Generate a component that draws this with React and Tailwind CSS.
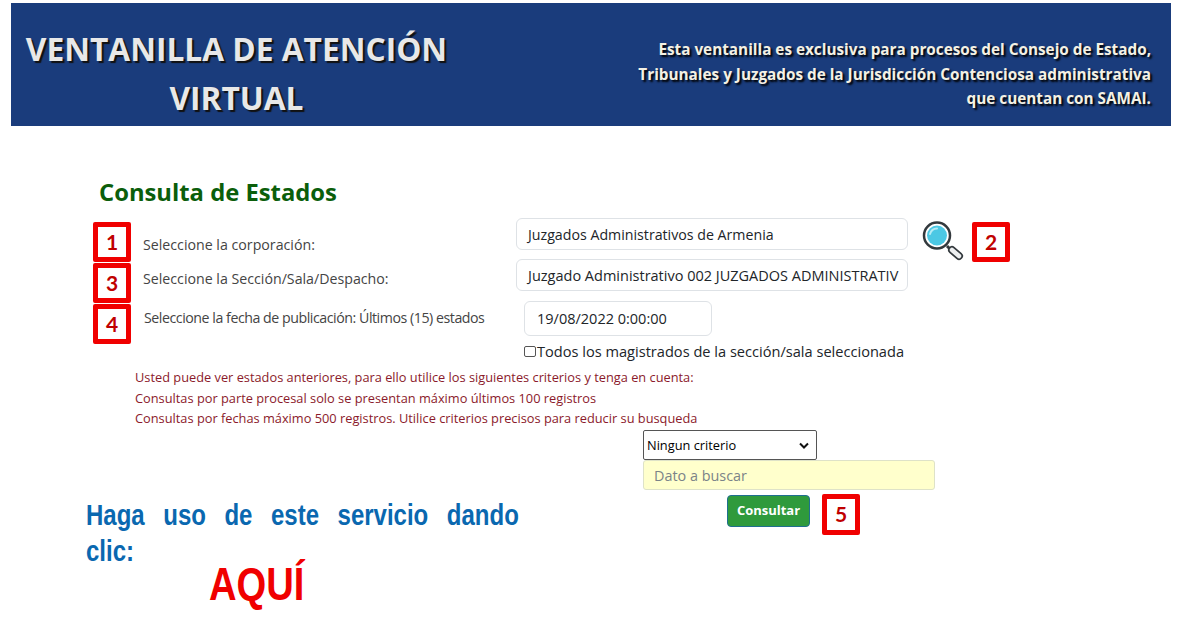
// App.jsx
import React from "react";

function NumBox({ n, className = "" }) {
  return (
    <div className={`flex h-[40px] w-[38px] shrink-0 items-center justify-center rounded-[2px] border-[5px] border-[#f00000] bg-white font-['Lato',sans-serif] text-[21px] font-bold text-[#c00000] ${className}`}>
      {n}
    </div>
  );
}

function Lupa() {
  return (
    <svg width="42" height="44" viewBox="0 0 42 44" className="shrink-0">
      <path d="M25 26l4 4" stroke="#33393d" strokeWidth="3" />
      <path d="M30 30l7 6" stroke="#33393d" strokeWidth="8" strokeLinecap="round" />
      <path d="M30 30l7 6" stroke="#eef0f1" strokeWidth="4.500" strokeLinecap="round" />
      <circle cx="15" cy="15.500" r="13" fill="#fff" stroke="#33393d" strokeWidth="2.500" />
      <circle cx="15" cy="15.500" r="10" fill="#4cc8e4" />
      <path d="M8 14c1-3.500 3.500-5.500 7-5.500" fill="none" stroke="#b6ecf6" strokeWidth="2" strokeLinecap="round" />
    </svg>
  );
}

export default function App() {
  return (
    <div className="h-[631px] w-[1180px] overflow-hidden bg-white pt-[3px] font-['Open_Sans',sans-serif] text-[#212529]">
      <header className="mx-[11px] flex h-[123px] w-[1160px] items-start justify-between bg-[#1a3c7c]">
        <h1 className="ml-[14px] mt-[21px] w-[423px] text-center text-[31.700px] font-bold leading-[49px] text-[#e8e8e8] [text-shadow:2px_2px_1px_#111]">
          VENTANILLA DE ATENCIÓN VIRTUAL
        </h1>
        <p className="mr-[20px] mt-[34px] whitespace-nowrap text-right text-[15.300px] font-bold leading-[24.500px] text-[#f4f1e4] [text-shadow:2px_2px_2px_#000]">
          Esta ventanilla es exclusiva para procesos del Consejo de Estado,
          <br />
          Tribunales y Juzgados de la Jurisdicción Contenciosa administrativa
          <br />
          que cuentan con SAMAI.
        </p>
      </header>

      <h2 className="ml-[99px] mt-[50px] text-[23.800px] font-bold leading-[32px] text-[#0b5e0b]">Consulta de Estados</h2>

      <section className="ml-[93px] mt-[10px] text-[#444]">
        <div className="flex h-[41px]">
          <div className="pt-[4px]"><NumBox n="1" /></div>
          <span className="ml-[12px] w-[373px] pt-[17px] text-[14.200px] leading-[20px]">Seleccione la corporación:</span>
          <div className="flex h-[32px] w-[392px] items-center rounded-[6px] border border-[#dee2e6] pl-[11px] pt-[2px] text-[14.200px] text-[#212529]">
            Juzgados Administrativos de Armenia
          </div>
          <div className="ml-[14px] pt-[2px]"><Lupa /></div>
          <div className="ml-[8px] pt-[4px]"><NumBox n="2" /></div>
        </div>

        <div className="flex h-[42px]">
          <div className="pt-[4px]"><NumBox n="3" /></div>
          <span className="ml-[12px] w-[373px] pt-[10px] text-[14.200px] leading-[20px]">Seleccione la Sección/Sala/Despacho:</span>
          <div className="flex h-[32px] w-[392px] items-center overflow-hidden whitespace-nowrap rounded-[6px] border border-[#dee2e6] pl-[11px] pr-[10px] pt-[2px] text-[14.500px] text-[#212529]">
            Juzgado Administrativo 002 JUZGADOS ADMINISTRATIV
          </div>
        </div>

        <div className="flex">
          <div className="pt-[3px]"><NumBox n="4" /></div>
          <span className="ml-[13px] w-[380px] whitespace-nowrap pt-[7px] text-[14.200px] leading-[20px] tracking-[-0.46px]">Seleccione la fecha de publicación: Últimos (15) estados</span>
          <div>
            <div className="flex h-[35px] w-[188px] items-center rounded-[6px] border border-[#dee2e6] pl-[12px] pt-[1px] text-[14.500px] text-[#212529]">
              19/08/2022 0:00:00
            </div>
            <label className="mt-[5px] flex items-center whitespace-nowrap text-[14.600px] leading-[20px] text-[#212529]">
              <span className="mr-[1px] h-[11px] w-[12px] rounded-[2px] border border-[#555]" />
              Todos los magistrados de la sección/sala seleccionada
            </label>
          </div>
        </div>
      </section>

      <div className="ml-[135px] mt-[6px] text-[12.800px] leading-[20.500px] text-[#8b1a2b]">
        <p>Usted puede ver estados anteriores, para ello utilice los siguientes criterios y tenga en cuenta:</p>
        <p>Consultas por parte procesal solo se presentan máximo últimos 100 registros</p>
        <p>Consultas por fechas máximo 500 registros. Utilice criterios precisos para reducir su busqueda</p>
      </div>

      <div className="mt-[1px] flex">
        <div className="ml-[86px] mt-[67px] w-[433px] font-['Liberation_Sans',sans-serif] font-bold">
          <p className="w-[541px] origin-left scale-x-[0.8] text-[30px] leading-[36px] text-[#0a68b0]">
            <span className="block [text-align-last:justify]">Haga uso de este servicio dando</span>
            clic:
          </p>
          <p className="-mt-[13px] ml-[123px] origin-left scale-x-[0.83] text-[46px] leading-[56px] text-[#f00000]">AQUÍ</p>
        </div>
        <div className="ml-[124px]">
          <div className="flex h-[30px] w-[174px] items-center justify-between rounded-[2px] border border-[#555] pl-[3px] pr-[7px] pt-[2px] text-[12.800px] text-black">
            Ningun criterio
            <svg width="10" height="7" viewBox="0 0 10 7"><path d="M1 1.500l4 4 4-4" fill="none" stroke="#111" strokeWidth="2" /></svg>
          </div>
          <div className="flex h-[30px] w-[292px] items-center rounded-[3px] border border-[#dee2c8] bg-[#ffffcc] pl-[10px] pt-[2px] text-[14.400px] text-[#7b8388]">
            Dato a buscar
          </div>
          <div className="mt-[4px] flex items-start">
            <button className="ml-[84px] mt-[1px] h-[32px] w-[83px] rounded-[4px] border border-[#1f6f8f] bg-[#2f9a3c] text-[13px] font-bold text-white">Consultar</button>
            <NumBox n="5" className="ml-[12px] h-[41px]" />
          </div>
        </div>
      </div>
    </div>
  );
}
